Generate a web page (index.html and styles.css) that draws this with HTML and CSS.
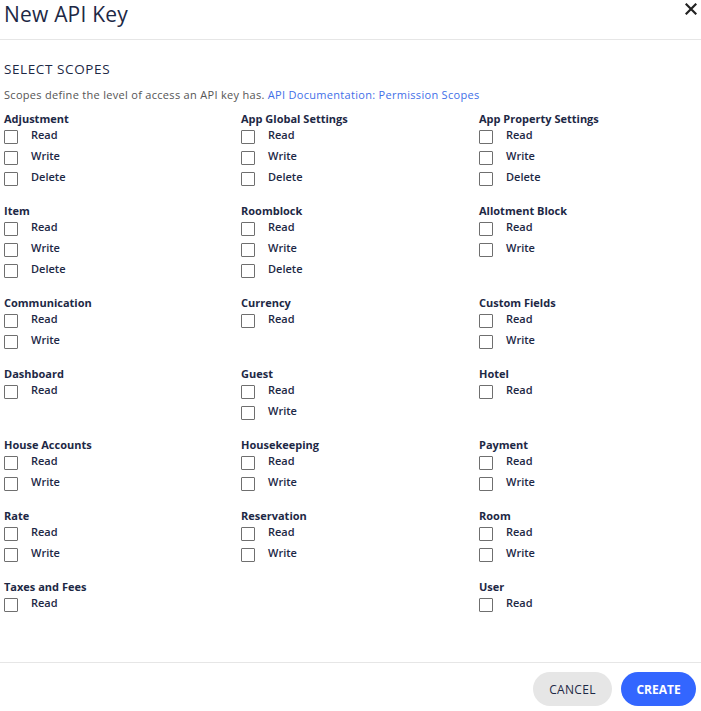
FILE: index.html
```html
<!DOCTYPE html>
<html lang="en">
<head>
    <meta charset="UTF-8">
    <meta name="viewport" content="width=device-width, initial-scale=1.0">
    <title>New API Key</title>
    <link rel="stylesheet" href="styles.css">
</head>
<body>
    <div class="dialog">
        <div class="dialog-header">
            <h1 class="dialog-title">New API Key</h1>
            <button class="close-btn" aria-label="Close">
                <svg width="12" height="12" viewBox="0 0 12 12"><path d="M1.5 1.5 L10.5 10.5 M10.5 1.5 L1.5 10.5" stroke="#222" stroke-width="2.2" stroke-linecap="square"/></svg>
            </button>
        </div>

        <div class="dialog-body">
            <h2 class="section-title">SELECT SCOPES</h2>
            <p class="section-desc">Scopes define the level of access an API key has. <a href="#">API Documentation: Permission Scopes</a></p>

            <div class="scopes">
                <div class="scope">
                    <div class="scope-name">Adjustment</div>
                    <label class="perm"><input type="checkbox"><span>Read</span></label>
                    <label class="perm"><input type="checkbox"><span>Write</span></label>
                    <label class="perm"><input type="checkbox"><span>Delete</span></label>
                </div>
                <div class="scope">
                    <div class="scope-name">App Global Settings</div>
                    <label class="perm"><input type="checkbox"><span>Read</span></label>
                    <label class="perm"><input type="checkbox"><span>Write</span></label>
                    <label class="perm"><input type="checkbox"><span>Delete</span></label>
                </div>
                <div class="scope">
                    <div class="scope-name">App Property Settings</div>
                    <label class="perm"><input type="checkbox"><span>Read</span></label>
                    <label class="perm"><input type="checkbox"><span>Write</span></label>
                    <label class="perm"><input type="checkbox"><span>Delete</span></label>
                </div>

                <div class="scope">
                    <div class="scope-name">Item</div>
                    <label class="perm"><input type="checkbox"><span>Read</span></label>
                    <label class="perm"><input type="checkbox"><span>Write</span></label>
                    <label class="perm"><input type="checkbox"><span>Delete</span></label>
                </div>
                <div class="scope">
                    <div class="scope-name">Roomblock</div>
                    <label class="perm"><input type="checkbox"><span>Read</span></label>
                    <label class="perm"><input type="checkbox"><span>Write</span></label>
                    <label class="perm"><input type="checkbox"><span>Delete</span></label>
                </div>
                <div class="scope">
                    <div class="scope-name">Allotment Block</div>
                    <label class="perm"><input type="checkbox"><span>Read</span></label>
                    <label class="perm"><input type="checkbox"><span>Write</span></label>
                </div>

                <div class="scope">
                    <div class="scope-name">Communication</div>
                    <label class="perm"><input type="checkbox"><span>Read</span></label>
                    <label class="perm"><input type="checkbox"><span>Write</span></label>
                </div>
                <div class="scope">
                    <div class="scope-name">Currency</div>
                    <label class="perm"><input type="checkbox"><span>Read</span></label>
                </div>
                <div class="scope">
                    <div class="scope-name">Custom Fields</div>
                    <label class="perm"><input type="checkbox"><span>Read</span></label>
                    <label class="perm"><input type="checkbox"><span>Write</span></label>
                </div>

                <div class="scope">
                    <div class="scope-name">Dashboard</div>
                    <label class="perm"><input type="checkbox"><span>Read</span></label>
                </div>
                <div class="scope">
                    <div class="scope-name">Guest</div>
                    <label class="perm"><input type="checkbox"><span>Read</span></label>
                    <label class="perm"><input type="checkbox"><span>Write</span></label>
                </div>
                <div class="scope">
                    <div class="scope-name">Hotel</div>
                    <label class="perm"><input type="checkbox"><span>Read</span></label>
                </div>

                <div class="scope">
                    <div class="scope-name">House Accounts</div>
                    <label class="perm"><input type="checkbox"><span>Read</span></label>
                    <label class="perm"><input type="checkbox"><span>Write</span></label>
                </div>
                <div class="scope">
                    <div class="scope-name">Housekeeping</div>
                    <label class="perm"><input type="checkbox"><span>Read</span></label>
                    <label class="perm"><input type="checkbox"><span>Write</span></label>
                </div>
                <div class="scope">
                    <div class="scope-name">Payment</div>
                    <label class="perm"><input type="checkbox"><span>Read</span></label>
                    <label class="perm"><input type="checkbox"><span>Write</span></label>
                </div>

                <div class="scope">
                    <div class="scope-name">Rate</div>
                    <label class="perm"><input type="checkbox"><span>Read</span></label>
                    <label class="perm"><input type="checkbox"><span>Write</span></label>
                </div>
                <div class="scope">
                    <div class="scope-name">Reservation</div>
                    <label class="perm"><input type="checkbox"><span>Read</span></label>
                    <label class="perm"><input type="checkbox"><span>Write</span></label>
                </div>
                <div class="scope">
                    <div class="scope-name">Room</div>
                    <label class="perm"><input type="checkbox"><span>Read</span></label>
                    <label class="perm"><input type="checkbox"><span>Write</span></label>
                </div>

                <div class="scope">
                    <div class="scope-name">Taxes and Fees</div>
                    <label class="perm"><input type="checkbox"><span>Read</span></label>
                </div>
                <div class="scope"></div>
                <div class="scope">
                    <div class="scope-name">User</div>
                    <label class="perm"><input type="checkbox"><span>Read</span></label>
                </div>
            </div>
        </div>

        <div class="dialog-footer">
            <button class="btn btn-cancel">CANCEL</button>
            <button class="btn btn-create">CREATE</button>
        </div>
    </div>
</body>
</html>
```

FILE: styles.css
```css
* {
    box-sizing: border-box;
}
body {
    margin: 0;
    background: #fff;
    font-family: "Open Sans", "Liberation Sans", sans-serif;
    color: #1d2845;
}
.dialog {
    width: 701px;
    height: 711px;
    display: flex;
    flex-direction: column;
    overflow: hidden;
}
.dialog-header {
    height: 40px;
    display: flex;
    justify-content: space-between;
    align-items: flex-start;
    padding: 0 4px;
    border-bottom: 1px solid #e6e6e6;
}
.dialog-title {
    margin: 0;
    font-size: 21px;
    font-weight: 400;
    line-height: 28px;
    letter-spacing: 0.2px;
    color: #1d2845;
}
.close-btn {
    background: none;
    border: none;
    padding: 0;
    margin-top: 3px;
    cursor: pointer;
}
.dialog-body {
    flex: 1;
    padding: 20px 4px 0;
}
.section-title {
    margin: 0;
    font-size: 13.5px;
    font-weight: 500;
    line-height: 18px;
    letter-spacing: 0.6px;
    color: #1d2845;
}
.section-desc {
    margin: 10px 0 0;
    font-size: 11px;
    line-height: 14px;
    letter-spacing: 0.3px;
    color: #555;
}
.section-desc a {
    color: #3f6fe8;
    text-decoration: none;
}
.scopes {
    margin-top: 10px;
    display: grid;
    grid-template-columns: 237px 238px 1fr;
}
.scope {
    padding-bottom: 15px;
}
.scope-name {
    font-size: 11px;
    font-weight: 700;
    line-height: 14px;
    color: #1d2845;
}
.perm {
    display: flex;
    align-items: center;
    height: 21px;
}
.perm input {
    appearance: none;
    width: 14px;
    height: 14px;
    margin: 0 13px 0 0;
    border: 1px solid #6f6f6f;
    border-radius: 1px;
    background: #fff;
}
.perm span {
    font-size: 11px;
    font-weight: 600;
    color: #1d2845;
    margin-top: -4px;
}
.dialog-footer {
    height: 49px;
    border-top: 1px solid #e6e6e6;
    display: flex;
    justify-content: flex-end;
    align-items: flex-start;
    gap: 9px;
    padding: 9px 5px 0;
}
.btn {
    height: 34px;
    border: none;
    border-radius: 17px;
    font-family: inherit;
    font-size: 12px;
    cursor: pointer;
}
.btn-cancel {
    width: 79px;
    background: #e6e6e6;
    color: #1d2845;
    font-weight: 500;
    letter-spacing: 0.3px;
}
.btn-create {
    width: 75px;
    background: #3366ff;
    color: #fff;
    font-weight: 700;
}
```
